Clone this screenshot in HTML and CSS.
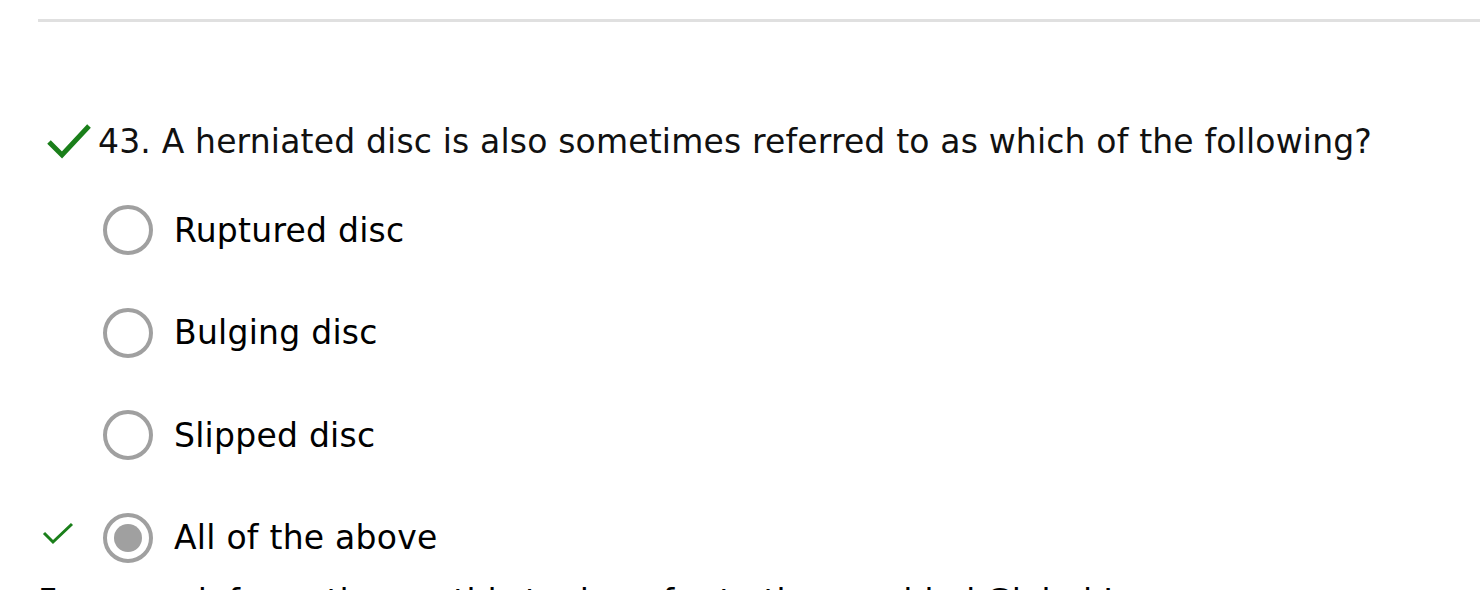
FILE: index.html
```html
<!DOCTYPE html>
<html>
<head>
<meta charset="utf-8">
<link rel="stylesheet" href="styles.css">
</head>
<body>
<div class="page">
  <hr class="rule">
  <div class="question">
    <svg class="qcheck" width="46" height="38" viewBox="0 0 46 38"><path d="M3 20 L16 33 L43 4" fill="none" stroke="#1a7f1a" stroke-width="5"/></svg>
    <span class="qtext">43. A herniated disc is also sometimes referred to as which of the following?</span>
  </div>
  <ul class="options">
    <li class="option"><span class="mark"></span><span class="radio"></span><span class="label">Ruptured disc</span></li>
    <li class="option"><span class="mark"></span><span class="radio"></span><span class="label">Bulging disc</span></li>
    <li class="option"><span class="mark"></span><span class="radio"></span><span class="label">Slipped disc</span></li>
    <li class="option"><span class="mark"><svg class="okmark" width="32" height="24" viewBox="0 0 32 24"><path d="M2 12 L11 21 L30 3" fill="none" stroke="#1a7f1a" stroke-width="3"/></svg></span><span class="radio checked"></span><span class="label">All of the above</span></li>
  </ul>
  <p class="more">For more information on this topic, refer to the provided Global Image.</p>
</div>
</body>
</html>
```
FILE: styles.css
```css
html, body { margin: 0; padding: 0; background: #fff; }
body { font-family: "DejaVu Sans", Verdana, sans-serif; color: #000; }
.page { padding: 19px 0 0 38px; overflow: hidden; height: 590px; box-sizing: border-box; }
.rule { border: 0; height: 3px; background: #e0e0e0; margin: 0; }
.question { display: flex; align-items: center; margin-top: 99px; margin-left: 8px; height: 40px; }
.qcheck { margin-right: 6px; }
.qtext { font-size: 33px; letter-spacing: 0.17px; color: #111; white-space: nowrap; }
.options { list-style: none; margin: 18px 0 0 0; padding: 0; }
.option { display: flex; align-items: center; height: 102.5px; }
.mark { width: 65px; display: flex; align-items: center; padding-left: 4px; box-sizing: border-box; }
.okmark { margin-top: -9px; }
.radio { width: 50px; height: 50px; box-sizing: border-box; border: 4px solid #a0a0a0; border-radius: 50%; position: relative; flex: none; }
.radio.checked::after { content: ""; position: absolute; left: 7px; top: 7px; width: 28px; height: 28px; border-radius: 50%; background: #a0a0a0; }
.label { margin-left: 21px; font-size: 33px; letter-spacing: 0.25px; }
.more { margin: -7px 0 0 0; font-size: 33px; letter-spacing: 0.2px; white-space: nowrap; }
```
